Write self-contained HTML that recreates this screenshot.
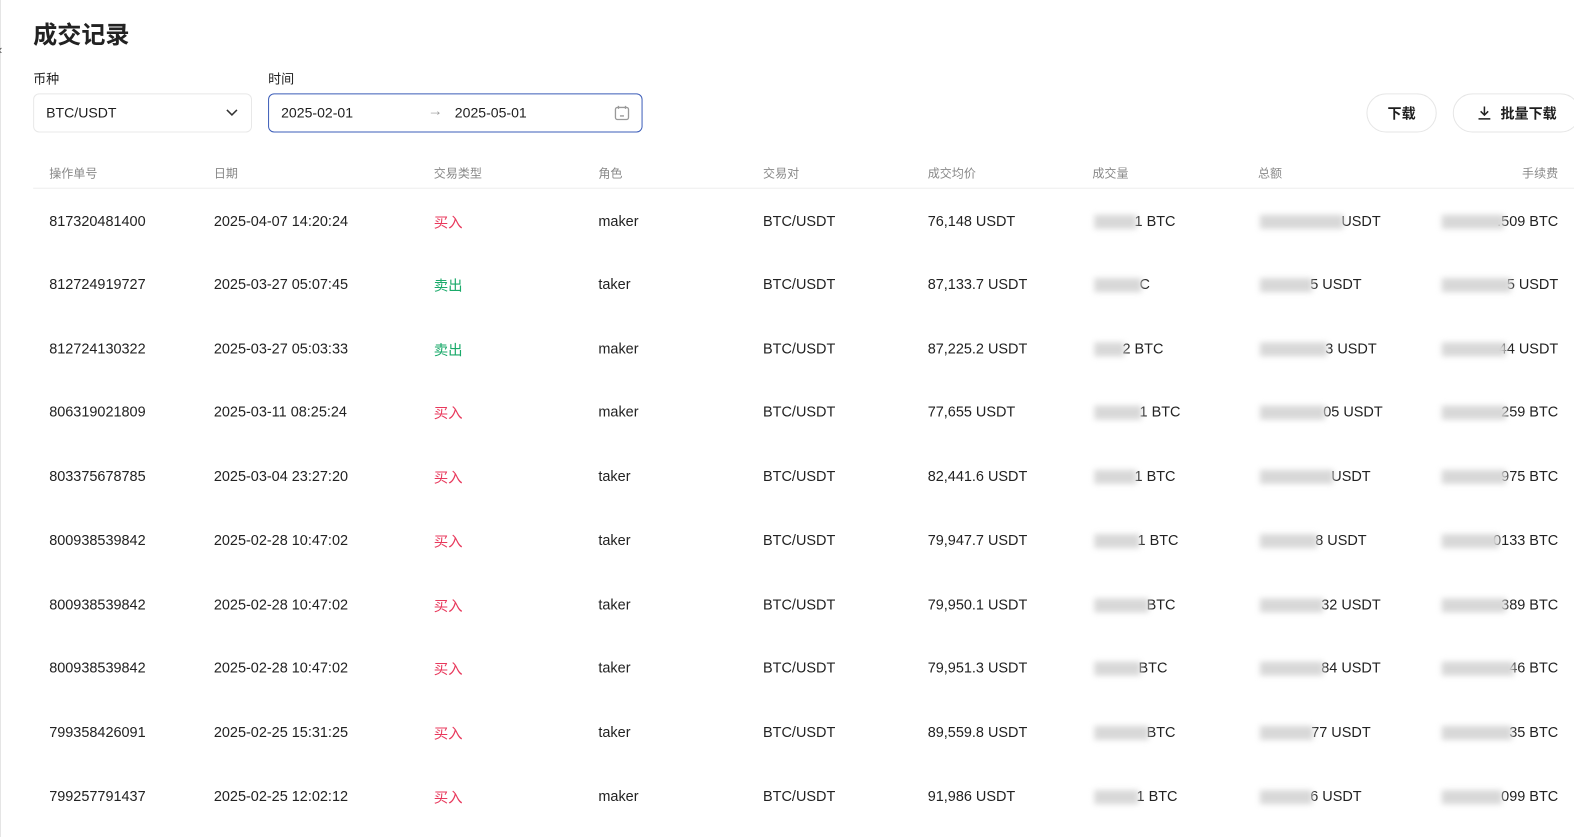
<!DOCTYPE html>
<html><head><meta charset="utf-8"><style>
*{margin:0;padding:0;box-sizing:border-box}
html,body{width:1574px;height:834px;overflow:hidden;background:#fff}
#w{position:absolute;left:0;top:0;width:1574px;height:834px;transform:scale(1.004);transform-origin:0 0;font-family:"Liberation Sans","Noto Sans CJK SC",sans-serif;color:#1e1e1e}
.a{position:absolute;white-space:nowrap}
h1{position:absolute;left:33px;top:15px;font-size:24px;font-weight:700;font-family:"Noto Sans CJK SC",sans-serif;color:#222}
.lbl{font-size:13px;color:#222;top:68px}
.box{position:absolute;top:93px;height:39px;border:1px solid #e8e8e8;border-radius:6px;font-size:14px;}
.btn{position:absolute;top:93px;height:39px;border:1px solid #e6e6e6;border-radius:20px;font-size:14px;font-weight:700;display:flex;align-items:center;justify-content:center}
.th{top:164px;font-size:12px;color:#888}
.td{font-size:14.4px;color:#222;transform:translateY(-50%)}
.buy{color:#e8395c}.sell{color:#1aaa6a}
.bl{position:absolute;height:14px;background:#d8d8d8;filter:blur(3px);transform:translateY(-50%)}
</style></head><body><div id="w">
<div class="a" style="left:0;top:0;width:1px;height:834px;background:#e5e5e5"></div>
<div class="a" style="left:-2px;top:42px;font-size:13px;color:#555">‹</div>
<h1>成交记录</h1>
<div class="a lbl" style="left:33px">币种</div>
<div class="a lbl" style="left:267px">时间</div>
<div class="box" style="left:33px;width:218px;padding:10px 12px">BTC/USDT
<svg style="position:absolute;right:13px;top:14px" width="12" height="8" viewBox="0 0 12 8"><path d="M1 1.5L6 6.5L11 1.5" fill="none" stroke="#333" stroke-width="1.5"/></svg></div>
<div class="box" style="left:267px;width:373px;border-color:#3b5cb8;padding:10px 12px">2025-02-01
<span class="a" style="left:158px;top:8px;color:#999;font-size:15px">→</span>
<span class="a" style="left:185px;top:10px">2025-05-01</span>
<svg style="position:absolute;right:11px;top:10px" width="17" height="17" viewBox="0 0 17 17"><rect x="2" y="3" width="13" height="12" rx="2" fill="none" stroke="#999" stroke-width="1.3"/><path d="M5 1.5v3M12 1.5v3M6.5 11.5h4" stroke="#999" stroke-width="1.3"/></svg></div>
<div class="btn" style="left:1361px;width:70px">下载</div>
<div class="btn" style="left:1447px;width:127px"><svg width="15" height="15" viewBox="0 0 14 14" style="margin-right:9px"><path d="M7 1v8M3.5 5.5L7 9l3.5-3.5M1.5 12.5h11" fill="none" stroke="#222" stroke-width="1.4"/></svg>批量下载</div>
<div class="a th" style="left:49px">操作单号</div>
<div class="a th" style="left:213px">日期</div>
<div class="a th" style="left:432px">交易类型</div>
<div class="a th" style="left:596px">角色</div>
<div class="a th" style="left:760px">交易对</div>
<div class="a th" style="left:924px">成交均价</div>
<div class="a th" style="left:1088px">成交量</div>
<div class="a th" style="left:1253px">总额</div>
<div class="a th" style="right:22px">手续费</div>
<div class="a" style="left:33px;top:187px;width:1541px;height:1px;background:#eee"></div>
<div id="rows"></div>
</div>
<script>
const d=[
["817320481400","2025-04-07 14:20:24",1,"maker","76,148 USDT","1 BTC",1130,"USDT",1336,".509 BTC",1498],
["812724919727","2025-03-27 05:07:45",0,"taker","87,133.7 USDT","C",1135,"5 USDT",1305,"5 USDT",1505],
["812724130322","2025-03-27 05:03:33",0,"maker","87,225.2 USDT","2 BTC",1118,"3 USDT",1320,"44 USDT",1500],
["806319021809","2025-03-11 08:25:24",1,"maker","77,655 USDT","1 BTC",1135,"05 USDT",1318,"259 BTC",1500],
["803375678785","2025-03-04 23:27:20",1,"taker","82,441.6 USDT","1 BTC",1130,"USDT",1326,"975 BTC",1500],
["800938539842","2025-02-28 10:47:02",1,"taker","79,947.7 USDT","1 BTC",1133,"8 USDT",1310,"0133 BTC",1493],
["800938539842","2025-02-28 10:47:02",1,"taker","79,950.1 USDT","BTC",1142,"32 USDT",1316,"389 BTC",1500],
["800938539842","2025-02-28 10:47:02",1,"taker","79,951.3 USDT","BTC",1134,"84 USDT",1316,"46 BTC",1508],
["799358426091","2025-02-25 15:31:25",1,"taker","89,559.8 USDT","BTC",1142,"77 USDT",1306,"35 BTC",1506],
["799257791437","2025-02-25 12:02:12",1,"maker","91,986 USDT","1 BTC",1132,"6 USDT",1305,"099 BTC",1496]];
const ys=[221,284,348,411,475,539,603,666,730,794];
let h="";
d.forEach((r,i)=>{const y=ys[i];
h+=`<div class="a td" style="left:49px;top:${y}px">${r[0]}</div>
<div class="a td" style="left:213px;top:${y}px">${r[1]}</div>
<div class="a td ${r[2]?'buy':'sell'}" style="left:432px;top:${y}px">${r[2]?'买入':'卖出'}</div>
<div class="a td" style="left:596px;top:${y}px">${r[3]}</div>
<div class="a td" style="left:760px;top:${y}px">BTC/USDT</div>
<div class="a td" style="left:924px;top:${y}px">${r[4]}</div>
<div class="a td" style="left:${r[6]}px;top:${y}px">${r[5]}</div>
<div class="bl" style="left:1090px;width:${r[6]-1088}px;top:${y}px"></div>
<div class="a td" style="left:${r[8]}px;top:${y}px">${r[7]}</div>
<div class="bl" style="left:1255px;width:${r[8]-1253}px;top:${y}px"></div>
<div class="a td" style="right:22px;top:${y}px">${r[9]}</div>
<div class="bl" style="left:1436px;width:${r[10]-1436}px;top:${y}px"></div>`;});
document.getElementById("rows").innerHTML=h;
</script>
</body></html>
